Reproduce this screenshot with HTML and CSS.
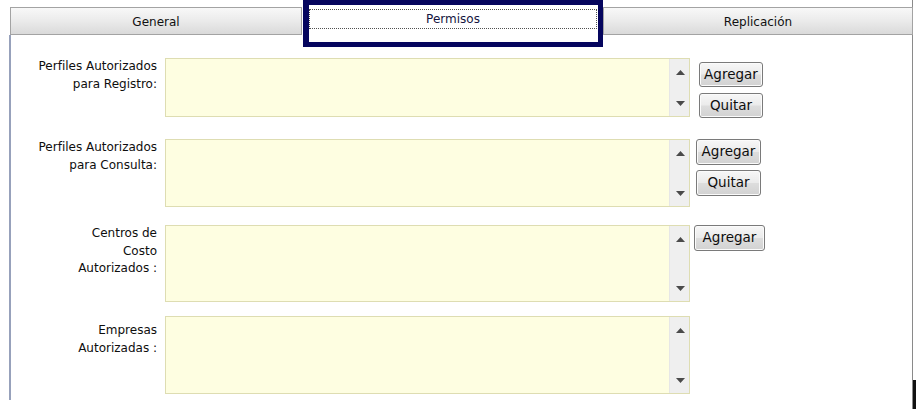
FILE: index.html
```html
<!DOCTYPE html>
<html lang="es">
<head>
<meta charset="utf-8">
<title>Permisos</title>
<link rel="stylesheet" href="styles.css">
</head>
<body>
<div class="page">
  <div class="main">
    <div class="tabs">
      <div class="tab tab-general">General</div>
      <div class="tab-active"><div class="focus">Permisos</div></div>
      <div class="tab tab-repl">Replicación</div>
    </div>
    <div class="panel">
      <div class="field row1">
        <div class="label">Perfiles Autorizados<br>para Registro:</div>
        <div class="list">
          <div class="list-body"></div>
          <div class="sbar">
            <svg class="arr" width="9" height="5" viewBox="0 0 9 5"><polygon points="4.5,0 9,5 0,5" fill="#4a4a4a"/></svg>
            <svg class="arr" width="9" height="5" viewBox="0 0 9 5"><polygon points="0,0 9,0 4.5,5" fill="#4a4a4a"/></svg>
          </div>
        </div>
        <div class="btns btns1">
          <button class="btn w64">Agregar</button>
          <button class="btn w64">Quitar</button>
        </div>
      </div>
      <div class="field row2">
        <div class="label">Perfiles Autorizados<br>para Consulta:</div>
        <div class="list">
          <div class="list-body"></div>
          <div class="sbar">
            <svg class="arr" width="9" height="5" viewBox="0 0 9 5"><polygon points="4.5,0 9,5 0,5" fill="#4a4a4a"/></svg>
            <svg class="arr" width="9" height="5" viewBox="0 0 9 5"><polygon points="0,0 9,0 4.5,5" fill="#4a4a4a"/></svg>
          </div>
        </div>
        <div class="btns btns2">
          <button class="btn w65 tall">Agregar</button>
          <button class="btn w65 tall">Quitar</button>
        </div>
      </div>
      <div class="field row3">
        <div class="label">Centros de<br>Costo<br>Autorizados :</div>
        <div class="list">
          <div class="list-body"></div>
          <div class="sbar">
            <svg class="arr" width="9" height="5" viewBox="0 0 9 5"><polygon points="4.5,0 9,5 0,5" fill="#4a4a4a"/></svg>
            <svg class="arr" width="9" height="5" viewBox="0 0 9 5"><polygon points="0,0 9,0 4.5,5" fill="#4a4a4a"/></svg>
          </div>
        </div>
        <div class="btns btns3">
          <button class="btn w71 tall">Agregar</button>
        </div>
      </div>
      <div class="field row4">
        <div class="label label-low">Empresas<br>Autorizadas :</div>
        <div class="list">
          <div class="list-body"></div>
          <div class="sbar">
            <svg class="arr" width="9" height="5" viewBox="0 0 9 5"><polygon points="4.5,0 9,5 0,5" fill="#4a4a4a"/></svg>
            <svg class="arr" width="9" height="5" viewBox="0 0 9 5"><polygon points="0,0 9,0 4.5,5" fill="#4a4a4a"/></svg>
          </div>
        </div>
        <div class="btns"></div>
      </div>
    </div>
  </div>
  <div class="edge"></div>
</div>
</body>
</html>
```
FILE: styles.css
```css
* { box-sizing: border-box; }
html, body {
  margin: 0;
  padding: 0;
  background: #ffffff;
}
body {
  width: 916px;
  height: 409px;
  overflow: hidden;
  font-family: "DejaVu Sans", Verdana, sans-serif;
  font-size: 12px;
  color: #111111;
}
.page {
  display: flex;
  height: 409px;
}
.main {
  margin-left: 9px;
  width: 904px;
  display: flex;
  flex-direction: column;
  border-right: 1px solid #8a8a8a;
}
.edge {
  align-self: flex-end;
  width: 3px;
  height: 29px;
  background: #111111;
}
.tabs {
  height: 35px;
  padding-top: 7px;
  margin-right: -1px;
  display: flex;
  align-items: flex-start;
}
.tab {
  height: 28px;
  border: 1px solid #a3a3a3;
  background: linear-gradient(#f8f8f8 0%, #ececec 45%, #dadada 100%);
  display: flex;
  align-items: center;
  justify-content: center;
  color: #111111;
  padding-top: 1px;
}
.tab-general {
  margin-left: 1px;
  width: 292px;
}
.tab-repl {
  width: 310px;
}
.tab-active {
  position: relative;
  z-index: 2;
  margin-left: 1px;
  margin-top: -7px;
  width: 300px;
  height: 47px;
  border-style: solid;
  border-color: #05055e;
  border-width: 5px 5px 5px 6px;
  background: #ffffff;
  padding-top: 4px;
}
.focus {
  height: 20px;
  border: 1px dotted #505050;
  display: flex;
  align-items: center;
  justify-content: center;
  color: #141440;
  margin-right: 1px;
}
.panel {
  height: 365px;
  border-left: 2px solid #97a1bb;
  padding-top: 23px;
  display: flex;
  flex-direction: column;
}
.field {
  display: grid;
  grid-template-columns: 154px 525px auto;
  align-items: start;
}
.row1 .list { height: 59px; }
.row2 { margin-top: 21px; }
.row2 .list { height: 68px; }
.row3 { margin-top: 18px; }
.row3 .list { height: 77px; }
.row4 { margin-top: 14px; }
.row4 .list { height: 78px; }
.label {
  text-align: right;
  padding-right: 8px;
  line-height: 17.5px;
  color: #0e0e0e;
}
.label-low { padding-top: 6px; }
.list {
  display: flex;
  border: 1px solid #deddb2;
  background: #fefee1;
}
.list-body { flex: 1; }
.sbar {
  width: 20px;
  background: #efefef;
  border-left: 1px solid #e6e6e6;
  display: flex;
  flex-direction: column;
  justify-content: space-between;
  align-items: center;
  padding: 11px 0 10px 1px;
}
.arr { display: block; }
.btns {
  display: flex;
  flex-direction: column;
  gap: 6px;
}
.btns1 { margin-left: 9px; padding-top: 4px; }
.btns2 { margin-left: 6px; gap: 5px; }
.btns3 { margin-left: 4px; }
.btn {
  height: 25px;
  padding: 0;
  border: 1px solid #7a7a7a;
  border-radius: 3px;
  background: linear-gradient(#f7f7f7 0%, #ebebeb 48%, #dddddd 52%, #d2d2d2 100%);
  box-shadow: inset 0 0 0 1px #fbfbfb;
  font-family: "DejaVu Sans", Verdana, sans-serif;
  font-size: 13.5px;
  color: #0e0e0e;
  line-height: 1;
}
.btn.tall { height: 26px; }
.w64 { width: 64px; }
.w65 { width: 65px; }
.w71 { width: 71px; }
```
